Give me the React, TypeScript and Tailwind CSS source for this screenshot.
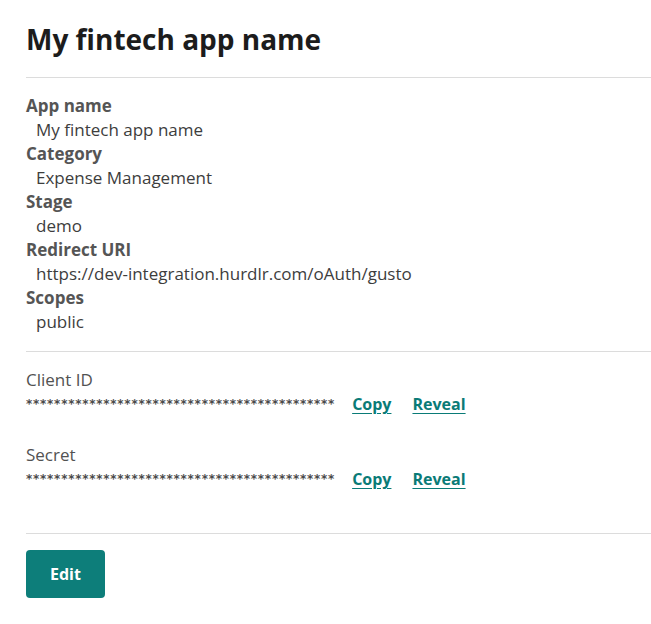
import React from "react";

type Field = { label: string; value: string };

const fields: Field[] = [
  { label: "App name", value: "My fintech app name" },
  { label: "Category", value: "Expense Management" },
  { label: "Stage", value: "demo" },
  { label: "Redirect URI", value: "https://dev-integration.hurdlr.com/oAuth/gusto" },
  { label: "Scopes", value: "public" },
];

const mask = "*".repeat(44);

function Credential({ label }: { label: string }) {
  return (
    <div className="mb-[27px]">
      <p className="text-[17px] leading-6 text-[#525252]">{label}</p>
      <div className="flex items-center h-6">
        <span className="font-['DejaVu_Sans',sans-serif] font-bold text-[12px] tracking-[0.75px] text-[#4a4a4a] leading-6">
          {mask}
        </span>
        <a href="#" className="ml-[17px] font-bold text-[16px] text-[#0a7b77] underline underline-offset-[3px]">
          Copy
        </a>
        <a href="#" className="ml-[21px] font-bold text-[16px] text-[#0a7b77] underline underline-offset-[3px]">
          Reveal
        </a>
      </div>
    </div>
  );
}

export default function App() {
  return (
    <div className="min-h-screen bg-white pl-[26px] pt-[21px] font-['Open_Sans',sans-serif]">
      <h1 className="text-[28px] leading-9 font-bold text-[#1c1c1c]">My fintech app name</h1>

      <div className="mt-5 border-t border-[#dcdcdc] pt-4 pb-[17px]">
        {fields.map((f) => (
          <div key={f.label}>
            <p className="text-[17px] leading-6 font-bold text-[#555]">{f.label}</p>
            <p className="pl-[10px] text-[17px] leading-6 text-[#3d3d3d]">{f.value}</p>
          </div>
        ))}
      </div>

      <div className="border-t border-[#dcdcdc] pt-4 pb-[15px]">
        <Credential label="Client ID" />
        <Credential label="Secret" />
      </div>

      <div className="border-t border-[#dcdcdc] pt-4">
        <button className="w-[79px] h-12 rounded-[4px] bg-[#0d7e7a] text-white font-bold text-[16px]">
          Edit
        </button>
      </div>
    </div>
  );
}
